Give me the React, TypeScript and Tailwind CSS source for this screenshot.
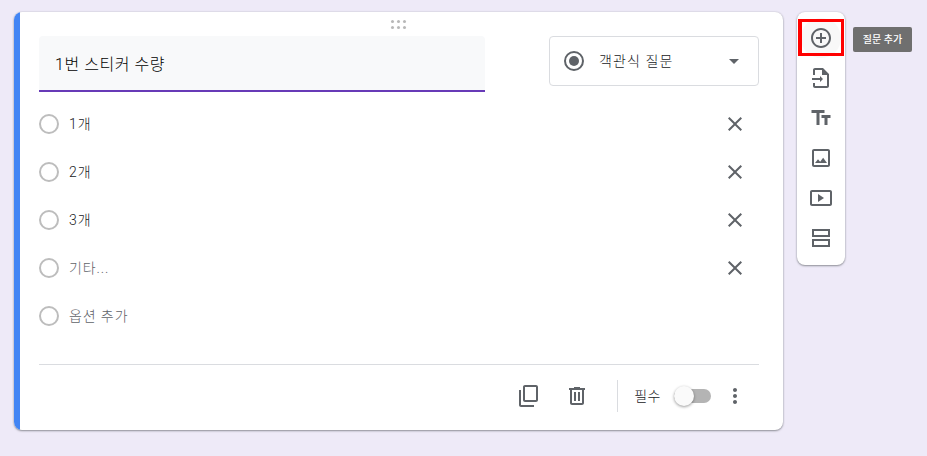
const ICONS = {
  addCircle:
    "M13 7h-2v4H7v2h4v4h2v-4h4v-2h-4V7zm-1-5C6.48 2 2 6.48 2 12s4.48 10 10 10 10-4.48 10-10S17.52 2 12 2zm0 18c-4.41 0-8-3.59-8-8s3.59-8 8-8 8 3.59 8 8-3.59 8-8 8z",
  importFile:
    "M14 2H6c-1.1 0-2 .9-2 2v5h2V4h7v5h5v11H6v-3H4v3c0 1.1.9 2 2 2h12c1.1 0 2-.9 2-2V8l-6-6zM11 10v2H3v2h8v2l3-3-3-3z",
  title: "M2.5 4v3h5v12h3V7h5V4h-13zm19 5h-9v3h3v7h3v-7h3V9z",
  image:
    "M19 5v14H5V5h14m0-2H5c-1.1 0-2 .9-2 2v14c0 1.1.9 2 2 2h14c1.1 0 2-.9 2-2V5c0-1.1-.9-2-2-2zm-4.86 8.86l-3 3.87L9 13.14 6 17h12l-3.86-5.14z",
  video:
    "M21 4H3c-1.1 0-2 .9-2 2v12c0 1.1.9 2 2 2h18c1.1 0 2-.9 2-2V6c0-1.1-.9-2-2-2zm0 14H3V6h18v12zM9 8v8l6-4z",
  section:
    "M3 3v8h18V3H3zm16 6H5V5h14v4zM3 13v8h18v-8H3zm16 6H5v-4h14v4z",
  close:
    "M19 6.41L17.59 5 12 10.59 6.41 5 5 6.41 10.59 12 5 17.59 6.41 19 12 13.41 17.59 19 19 17.59 13.41 12z",
  copy: "M19 1H8c-1.1 0-2 .9-2 2v13c0 1.1.9 2 2 2h11c1.1 0 2-.9 2-2V3c0-1.1-.9-2-2-2zm0 15H8V3h11v13zM4 6H2v15c0 1.1.9 2 2 2h13v-2H4V6z",
  trash:
    "M15 4V3H9v1H4v2h1v13c0 1.1.9 2 2 2h10c1.1 0 2-.9 2-2V6h1V4h-5zm2 15H7V6h10v13zM9 8h2v9H9zm4 0h2v9h-2z",
  more: "M12 8c1.1 0 2-.9 2-2s-.9-2-2-2-2 .9-2 2 .9 2 2 2zm0 2c-1.1 0-2 .9-2 2s.9 2 2 2 2-.9 2-2-.9-2-2-2zm0 6c-1.1 0-2 .9-2 2s.9 2 2 2 2-.9 2-2-.9-2-2-2z",
};

const Icon = ({ d }: { d: string }) => (
  <svg width="24" height="24" viewBox="0 0 24 24" className="fill-[#5f6368]">
    <path d={d} />
  </svg>
);

const OPTIONS = ["1개", "2개", "3개"];

const OptionRow = ({
  label,
  muted = false,
  removable = true,
}: {
  label: string;
  muted?: boolean;
  removable?: boolean;
}) => (
  <div className="flex h-12 items-center">
    <div className="h-5 w-5 rounded-full border-2 border-[#bdbdbd]" />
    <span
      className={`ml-[10px] flex-1 text-[14px] font-light tracking-[0.9px] ${
        muted ? "text-[#5f6368]" : "text-[#202124]"
      }`}
    >
      {label}
    </span>
    {removable && (
      <div className="flex w-12 justify-center">
        <Icon d={ICONS.close} />
      </div>
    )}
  </div>
);

const DragHandle = () => (
  <div className="flex h-6 items-center justify-center pr-[1px]">
    <div className="grid grid-cols-3 gap-x-[3px] gap-y-[3px]">
      {[0, 1, 2, 3, 4, 5].map((i) => (
        <span key={i} className="h-[3px] w-[3px] rounded-full bg-[#b8b8b8]" />
      ))}
    </div>
  </div>
);

const App = () => {
  return (
    <div className="relative flex h-[456px] w-[927px] items-start gap-[14px] overflow-hidden bg-[#eeeaf8] pl-[14px] pt-[12px] font-['Roboto','Noto_Sans_CJK_KR',sans-serif]">
      {/* Question card */}
      <div className="flex h-[418px] w-[769px] overflow-hidden rounded-lg bg-white shadow-[0_1px_2px_rgba(60,64,67,0.5),0_0_2px_rgba(60,64,67,0.2)]">
        <div className="w-[6px] bg-[#4285f4]" />
        <div className="flex-1 pl-[19px] pr-[24px]">
          <DragHandle />

          <div className="flex items-start justify-between">
            <div className="flex h-[56px] w-[446px] items-center rounded-t border-b-2 border-[#673ab7] bg-[#f8f9fa] pl-4 pt-1 text-[16px] font-light tracking-[0.55px] text-black">
              1번 스티커 수량
            </div>
            <div className="flex h-[50px] w-[210px] items-center rounded border border-[#dadce0] pl-[14px] pr-[19px]">
              <div className="flex h-5 w-5 items-center justify-center rounded-full border-2 border-[#5f6368]">
                <div className="h-[10px] w-[10px] rounded-full bg-[#5f6368]" />
              </div>
              <span className="ml-[15px] flex-1 text-[14px] font-light tracking-[1.1px] text-[#202124]">
                객관식 질문
              </span>
              <div className="h-0 w-0 border-x-[5px] border-t-[5px] border-x-transparent border-t-[#5f6368]" />
            </div>
          </div>

          <div className="mt-2">
            {OPTIONS.map((option) => (
              <OptionRow key={option} label={option} />
            ))}
            <OptionRow label="기타..." muted />
            <OptionRow label="옵션 추가" muted removable={false} />
          </div>

          <div className="mt-6 border-t border-[#dadce0]" />

          {/* Footer actions */}
          <div className="mt-[15px] flex h-[32px] items-center justify-end">
            <Icon d={ICONS.copy} />
            <div className="ml-[24px]">
              <Icon d={ICONS.trash} />
            </div>
            <div className="ml-[28px] h-[32px] w-px bg-[#dadce0]" />
            <span className="ml-4 text-[14px] font-light tracking-[0.5px] text-[#202124]">
              필수
            </span>
            <div className="ml-[13px] flex h-[20px] w-[37px] items-center">
              <div className="relative h-[14px] w-full rounded-full bg-[#b4b4b4]">
                <div className="absolute -top-[3px] left-0 h-5 w-5 rounded-full bg-[#fafafa] shadow-[0_1px_3px_rgba(0,0,0,0.4)]" />
              </div>
            </div>
            <div className="ml-[12px] mr-[12px]">
              <Icon d={ICONS.more} />
            </div>
          </div>
        </div>
      </div>

      {/* Side toolbar */}
      <div className="flex h-[253px] w-[48px] flex-col items-center rounded-lg bg-white pt-[6px] shadow-[0_1px_2px_rgba(60,64,67,0.5),0_0_2px_rgba(60,64,67,0.2)]">
        <div className="flex h-10 w-10 items-center justify-center rounded-full bg-[#f8f8f8]">
          <Icon d={ICONS.addCircle} />
        </div>
        {[ICONS.importFile, ICONS.title, ICONS.image, ICONS.video, ICONS.section].map(
          (d) => (
            <div key={d} className="flex h-10 w-10 items-center justify-center">
              <Icon d={d} />
            </div>
          )
        )}
      </div>

      {/* Annotation box and tooltip lie over the toolbar */}
      <div className="absolute left-[798px] top-[19px] h-[37px] w-[46px] border-[3px] border-l-[4px] border-[#ff0000]" />
      <div className="absolute left-[853px] top-[27px] flex h-[25px] w-[59px] items-center justify-center rounded-[2px] bg-[#6f6f6f] text-[10px] font-medium text-white">
        질문 추가
      </div>
    </div>
  );
};

export default App;
